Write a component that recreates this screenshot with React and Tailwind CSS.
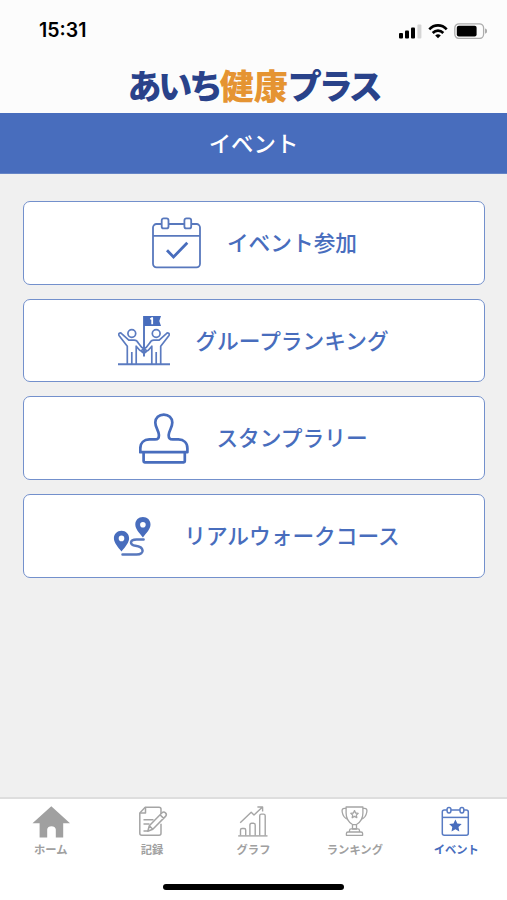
import React, { useState } from 'react';

// Iconos de las tarjetas, todos de 52x52
function IconoCalendario() {
  return (
    <svg viewBox="0 0 52 52" className="w-[52px] h-[52px]" fill="none" stroke="#5878bd" strokeWidth="1.8">
      <rect x="3" y="7" width="47" height="43.3" rx="3.5" />
      <path d="M3 18.8H50" />
      <rect x="11.7" y="1.4" width="6.8" height="10" rx="2" fill="#fff" />
      <rect x="34.4" y="1.4" width="6.8" height="10" rx="2" fill="#fff" />
      <path d="M17 33.2L23.5 40L37.3 25.8" stroke="#486dbd" strokeWidth="2.8" />
    </svg>
  );
}

function IconoGrupo() {
  return (
    <svg viewBox="0 0 52 52" className="w-[52px] h-[52px]" fill="none" stroke="#5b7bc0" strokeWidth="1.7" strokeLinejoin="round">
      <path d="M0 49.3H52" strokeWidth="1.9" />
      <path d="M26 1V41.5" strokeWidth="2" />
      <path d="M26 1H43L41.3 6L43 11H26Z" fill="#486dbd" stroke="none" />
      <path d="M32.4 4.3L34.2 3V9.2" stroke="#fff" strokeWidth="1.8" />
      <circle cx="13.8" cy="18.5" r="3.9" />
      <circle cx="38.2" cy="18.5" r="3.9" />
      <path d="M9.3 49V31.2L1 20.4C0 18.8 2.2 17 3.6 18.6L10.8 25.1H16.2C18.3 25.1 19.4 26.2 20.3 28L23.6 32.2L27.3 34.4C29.2 35.8 27.7 38.4 25.5 37.3L21.7 35.2L18.2 31.2V49M13.8 49V37" />
      <path d="M42.7 49V31.2L51 20.4C52 18.8 49.8 17 48.4 18.6L41.2 25.1H35.8C33.7 25.1 32.6 26.2 31.7 28L28.4 32.2L24.7 34.4C22.8 35.8 24.3 38.4 26.5 37.3L30.3 35.2L33.8 31.2V49M38.2 49V37" />
    </svg>
  );
}

function IconoSello() {
  return (
    <svg viewBox="0 0 52 52" className="w-[52px] h-[52px]" fill="none" stroke="#486dbd" strokeWidth="2.7" strokeLinejoin="round">
      <path d="M1.3 40.2V36.4C1.3 30.9 4.9 27.4 10.3 27.4H16C19 27.4 20.1 25.9 19.9 22.9C19.5 17.9 16.3 15.4 16.3 10.6C16.3 5.8 20 2.6 24.8 2.6S33.3 5.8 33.3 10.6C33.3 15.4 30.2 17.9 29.7 22.9C29.5 25.9 30.7 27.4 33.7 27.4H39.4C44.8 27.4 48.4 30.9 48.4 36.4V40.2Z" />
      <path d="M4.6 40.4V49.2C4.6 49.9 5 50.3 5.7 50.3H44.7C45.4 50.3 45.8 49.9 45.8 49.2V40.4" />
    </svg>
  );
}

function IconoRuta() {
  return (
    <svg viewBox="0 0 52 52" className="w-[52px] h-[52px]">
      <path fillRule="evenodd" fill="#486dbd" d="M14.5 20.7C18.9 20.7 22.1 23.9 22.1 28.2C22.1 32.8 18.2 36.7 14.5 41.6C10.8 36.7 6.9 32.8 6.9 28.2C6.9 23.9 10.1 20.7 14.5 20.7ZM14.5 25.6A2.8 2.8 0 1 0 14.5 31.2A2.8 2.8 0 1 0 14.5 25.6Z" />
      <path fillRule="evenodd" fill="#486dbd" d="M35.9 7C40.3 7 43.5 10.2 43.5 14.4C43.5 19 39.6 22.6 35.9 27.4C32.2 22.6 28.3 19 28.3 14.4C28.3 10.2 31.5 7 35.9 7ZM35.9 11.9A2.8 2.8 0 1 0 35.9 17.5A2.8 2.8 0 1 0 35.9 11.9Z" />
      <path d="M36.6 29.6H29.5C22.5 29.6 22.2 35 28.5 35.7C37 36.6 38.5 44.6 29.5 44.6H15.5" fill="none" stroke="#5878bd" strokeWidth="2.5" strokeLinecap="round" />
    </svg>
  );
}

// Iconos de la barra inferior
function IconoInicio() {
  return (
    <svg viewBox="0 0 38 34" className="w-[38px] h-[34px]" fill="#a0a0a0">
      <path d="M19.3 1.2L38 18.2H31.2V32.5H23.8V24.5C23.8 20 15.2 20 15.2 24.5V32.5H7.6V18.2H.5Z" />
    </svg>
  );
}

function IconoRegistro() {
  return (
    <svg viewBox="0 0 38 34" className="w-[38px] h-[34px]" fill="none" stroke="#a5a5a5" strokeWidth="1.5" strokeLinejoin="round">
      <path d="M28 9V4.3C28 3.1 27.2 2.3 26 2.3H12.2L6.8 7.9V28.3C6.8 29.6 7.5 30.3 8.8 30.3H26C27.2 30.3 28 29.6 28 28.3V18.8" />
      <path d="M12.5 2.6V8.1H7" />
      <path d="M10.5 14.7H20.5M10.5 19.1H16.5M10.5 26H15" />
      <path d="M14.8 26.3L16.3 20.8L28.8 8C31.3 5.6 34.8 8.8 32.5 11.4L19.8 24.3ZM16.3 20.8L19.8 24.3M27 9.8L30.7 13.4" fill="#fff" />
    </svg>
  );
}

function IconoGrafico() {
  return (
    <svg viewBox="0 0 38 34" className="w-[38px] h-[34px]" fill="none" stroke="#a5a5a5" strokeWidth="1.4" strokeLinejoin="round">
      <path d="M4.2 30.9H33.5" />
      <path d="M6.5 30.5V25Q6.5 23.5 8 23.5H10.2Q11.7 23.5 11.7 25V30.5M15.9 30.5V20Q15.9 18.2 17.7 18.2H19.5Q21.2 18.2 21.2 20V30.5M25.7 30.5V10.8Q25.7 9.1 27.4 9.1H29.5Q31.2 9.1 31.2 10.8V30.5" />
      <path d="M6.2 17.7L17.2 7.3L20 10L27.7 2.8M23.4 2H28.6V6.5" />
    </svg>
  );
}

function IconoTrofeo() {
  return (
    <svg viewBox="0 0 38 34" className="w-[38px] h-[34px]" fill="none" stroke="#a5a5a5" strokeWidth="1.3" strokeLinejoin="round">
      <path d="M10.1 2H26.9V8C26.9 14.5 24 17.5 20.5 19.5V24H16.5V19.5C13 17.5 10.1 14.5 10.1 8Z" />
      <path d="M10.2 3.3H8.5C6.3 3.3 5.8 5 6.2 7C6.8 10.8 8.8 13.3 12 14.5M26.8 3.3H28.5C30.7 3.3 31.2 5 30.8 7C30.2 10.8 28.2 13.3 25 14.5" />
      <path d="M16.5 19.7H20.5M13.5 27V25.5Q13.5 23.8 15.2 23.8H21.8Q23.5 23.8 23.5 25.5V27M10.4 30.3V28.6Q10.4 27 12 27H25Q26.6 27 26.6 28.6V30.3Z" />
      <path d="M18.5 5.6L19.6 8L22.2 8.3L20.3 10.1L20.8 12.7L18.5 11.4L16.2 12.7L16.7 10.1L14.8 8.3L17.4 8Z" />
    </svg>
  );
}

function IconoEvento() {
  return (
    <svg viewBox="0 0 38 34" className="w-[38px] h-[34px]" fill="none" stroke="#587bc3" strokeWidth="1.5">
      <rect x="5.3" y="5" width="26" height="25.3" rx="2" />
      <path d="M5.3 12.4H31.3" />
      <rect x="10.1" y="2.5" width="3.8" height="5.4" rx="1.8" fill="#fff" />
      <rect x="23" y="2.5" width="3.8" height="5.4" rx="1.8" fill="#fff" />
      <path fill="#486dbd" stroke="none" d="M18.4 14.6L20.3 18.6L24.7 19.1L21.5 22.1L22.3 26.5L18.4 24.3L14.5 26.5L15.3 22.1L12.1 19.1L16.5 18.6Z" />
    </svg>
  );
}

const opciones = [
  { texto: 'イベント参加', Icono: IconoCalendario },
  { texto: 'グループランキング', Icono: IconoGrupo },
  { texto: 'スタンプラリー', Icono: IconoSello },
  { texto: 'リアルウォークコース', Icono: IconoRuta },
];

const pestanas = [
  { id: 'home', texto: 'ホーム', Icono: IconoInicio },
  { id: 'record', texto: '記録', Icono: IconoRegistro },
  { id: 'graph', texto: 'グラフ', Icono: IconoGrafico },
  { id: 'ranking', texto: 'ランキング', Icono: IconoTrofeo },
  { id: 'event', texto: 'イベント', Icono: IconoEvento },
];

function BarraEstado() {
  return (
    <div className="h-[62px] pl-[39px] pr-5 flex justify-between items-center">
      <span className="font-['Inter'] font-semibold text-[19.5px] leading-none text-black">15:31</span>
      <div className="flex items-center gap-[6px]">
        <svg viewBox="0 0 24 16" className="w-6 h-4">
          <rect x="1" y="10" width="4" height="5.5" rx="1" />
          <rect x="7" y="7.5" width="4" height="8" rx="1" />
          <rect x="13" y="4.5" width="4" height="11" rx="1" />
          <rect x="19.4" y="1.5" width="4" height="14" rx="1" fill="#d5d5d5" />
        </svg>
        <svg viewBox="0 0 20 16" className="w-5 h-4" fill="none" stroke="#000" strokeWidth="2.6">
          <path d="M1.3 6.3C6.2 1.1 13.8 1.1 18.7 6.3" />
          <path d="M4.7 10C7.8 6.8 12.2 6.8 15.3 10" />
          <path d="M7.2 12.5Q10 10.2 12.8 12.5L10 15.2Z" fill="#000" stroke="none" />
        </svg>
        <svg viewBox="0 0 33 16" className="w-[33px] h-4">
          <rect x=".8" y=".8" width="28.8" height="14.6" rx="4.2" fill="none" stroke="#adadad" strokeWidth="1.3" />
          <rect x="2.8" y="2.8" width="19.8" height="10.6" rx="2" />
          <path d="M31 5.5Q33.3 6.3 33.3 8T31 10.7Z" fill="#adadad" />
        </svg>
      </div>
    </div>
  );
}

function App() {
  const [activa, setActiva] = useState('event');

  return (
    <div className="w-full h-[900px] flex flex-col overflow-hidden bg-[#f0f0f0] font-['Noto_Sans_CJK_JP',sans-serif]">
      <header className="h-[113px] shrink-0 bg-[#fcfcfc]">
        <BarraEstado />
        <div className="h-[46px] flex justify-center items-center font-black text-[34px] leading-none text-[#29428a] whitespace-nowrap">
          <span className="tracking-[-3.2px]">あいち</span>
          <span className="text-[#e59432]">健康</span>
          <span className="tracking-[-3.2px]">プラス</span>
        </div>
      </header>

      <div className="h-[61px] shrink-0 bg-[#486dbd] border-b border-[#6685c6] flex justify-center items-center">
        <h1 className="text-white font-medium text-[22.4px] leading-none pb-px">イベント</h1>
      </div>

      <main className="flex-1 pt-[27px] px-[22.5px] flex flex-col gap-[14px]">
        {opciones.map(({ texto, Icono }) => (
          <button
            key={texto}
            className="h-[83.7px] shrink-0 bg-white border-[1.5px] border-[#7390cc] rounded-[7px] flex justify-center items-center gap-[25px]"
          >
            <Icono />
            <span className="text-[#486dbd] font-medium text-[21.7px] leading-none whitespace-nowrap pb-[2px]">{texto}</span>
          </button>
        ))}
      </main>

      {/* Barra de navegación */}
      <footer className="h-[103px] shrink-0 bg-white border-t-2 border-[#dedede]">
        <nav className="h-[85px] pt-[6px] grid grid-cols-5">
          {pestanas.map(({ id, texto, Icono }) => (
            <button key={id} onClick={() => setActiva(id)} className="flex flex-col items-center gap-[5px]">
              <Icono />
              <span className={`font-bold text-[11.3px] leading-none whitespace-nowrap ${activa === id ? 'text-[#486dbd]' : 'text-[#a0a0a0]'}`}>
                {texto}
              </span>
            </button>
          ))}
        </nav>
        <div className="mx-auto w-[181px] h-[6px] rounded-full bg-black" />
      </footer>
    </div>
  );
}

export default App;
